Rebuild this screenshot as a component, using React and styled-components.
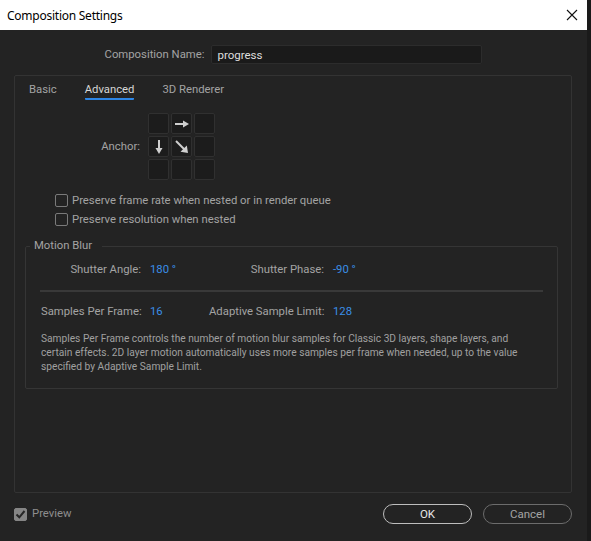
import React from "react";
import styled, { createGlobalStyle } from "styled-components";

const GlobalStyle = createGlobalStyle`
  html, body {
    margin: 0;
    padding: 0;
    background: #1b1b1b;
  }
  body {
    font-family: Roboto, "Noto Sans", sans-serif;
  }
`;

const anchorCells = [null, "right", null, "down", "diag", null, null, null, null];

const description = [
	"Samples Per Frame controls the number of motion blur samples for Classic 3D layers, shape layers, and",
	"certain effects. 2D layer motion automatically uses more samples per frame when needed, up to the value",
	"specified by Adaptive Sample Limit.",
];

const Arrow = ({ dir }) => {
	if (dir === "right")
		return (
			<svg width="16" height="16" viewBox="0 0 16 16">
				<path d="M1 8h9" stroke="#cfcfcf" strokeWidth="2" />
				<path d="M9 4.5L15 8 9 11.5z" fill="#cfcfcf" />
			</svg>
		);
	if (dir === "down")
		return (
			<svg width="16" height="16" viewBox="0 0 16 16">
				<path d="M8 1v9" stroke="#cfcfcf" strokeWidth="2" />
				<path d="M4.5 9L8 15 11.5 9z" fill="#cfcfcf" />
			</svg>
		);
	return (
		<svg width="16" height="16" viewBox="0 0 16 16">
			<path d="M2 2l8 8" stroke="#cfcfcf" strokeWidth="2" />
			<path d="M6.5 12.8L14 14 12.8 6.5z" fill="#cfcfcf" />
		</svg>
	);
};

const App = () => {
	return (
		<Screen>
			<GlobalStyle />
			<Window>
				<TitleBar>
					<Title>Composition Settings</Title>
					<CloseButton>
						<svg width="12" height="12" viewBox="0 0 12 12">
							<path d="M1 1l10 10M11 1L1 11" stroke="#111" strokeWidth="1.1" />
						</svg>
					</CloseButton>
				</TitleBar>
				<Body>
					<NameRow>
						<Label>Composition Name:</Label>
						<NameInput defaultValue="progress" />
					</NameRow>
					<TabPanel>
						<TabBar>
							<Tab>Basic</Tab>
							<Tab active>Advanced</Tab>
							<Tab>3D Renderer</Tab>
						</TabBar>
						<AnchorRow>
							<AnchorLabel>Anchor:</AnchorLabel>
							<AnchorGrid>
								{anchorCells.map((dir, i) => (
									<AnchorCell key={i}>{dir && <Arrow dir={dir} />}</AnchorCell>
								))}
							</AnchorGrid>
						</AnchorRow>
						<CheckList>
							<CheckRow>
								<CheckBox />
								<Label>Preserve frame rate when nested or in render queue</Label>
							</CheckRow>
							<CheckRow>
								<CheckBox />
								<Label>Preserve resolution when nested</Label>
							</CheckRow>
						</CheckList>
						<Group>
							<Legend>Motion Blur</Legend>
							<ValueGrid>
								<GridLabel>Shutter Angle:</GridLabel>
								<Value>180 °</Value>
								<GridLabel>Shutter Phase:</GridLabel>
								<Value>-90 °</Value>
							</ValueGrid>
							<Separator />
							<ValueGrid spaced>
								<GridLabel>Samples Per Frame:</GridLabel>
								<Value>16</Value>
								<GridLabel>Adaptive Sample Limit:</GridLabel>
								<Value>128</Value>
							</ValueGrid>
							<Description>
								{description.map((line, i) => (
									<span key={i}>{line}</span>
								))}
							</Description>
						</Group>
					</TabPanel>
					<Footer>
						<PreviewToggle>
							<CheckBox checked>
								<svg width="11" height="11" viewBox="0 0 11 11">
									<path d="M1.5 5.5l2.8 2.8L9.5 2" stroke="#262626" strokeWidth="2" fill="none" />
								</svg>
							</CheckBox>
							<PreviewText>Preview</PreviewText>
						</PreviewToggle>
						<Buttons>
							<PillButton primary>OK</PillButton>
							<PillButton>Cancel</PillButton>
						</Buttons>
					</Footer>
				</Body>
			</Window>
			<Edge />
		</Screen>
	);
};

export default App;

const Screen = styled.div`
	display: flex;
	width: 591px;
	height: 541px;
	overflow: hidden;
`;

const Window = styled.div`
	width: 587px;
	display: flex;
	flex-direction: column;
`;

const Edge = styled.div`
	width: 4px;
	background: #1a1a1a;
`;

const TitleBar = styled.div`
	height: 30px;
	background: #ffffff;
	display: flex;
	align-items: center;
	justify-content: space-between;
	padding: 0 9px 0 7px;
	box-sizing: border-box;
`;

const Title = styled.span`
	font-family: "Noto Sans", sans-serif;
	font-size: 12px;
	letter-spacing: -0.25px;
	color: #000;
`;

const CloseButton = styled.div`
	width: 12px;
	height: 12px;
	display: flex;
`;

const Body = styled.div`
	flex: 1;
	background: #232323;
	display: flex;
	flex-direction: column;
`;

const Label = styled.span`
	font-size: 11.3px;
	line-height: 16px;
	color: #a3a3a3;
	white-space: nowrap;
`;

const NameRow = styled.div`
	display: flex;
	justify-content: center;
	align-items: center;
	gap: 7px;
	margin-top: 15px;
`;

const NameInput = styled.input`
	width: 271px;
	height: 19px;
	box-sizing: border-box;
	background: #1a1a1a;
	border: 1px solid #2c2c2c;
	border-radius: 2px;
	color: #dedede;
	font-family: inherit;
	font-size: 11.5px;
	padding: 0 5px;
	outline: none;
`;

const TabPanel = styled.div`
	flex: 1;
	margin: 11px 15px 0 14px;
	border: 1px solid #333333;
	border-radius: 2px;
	display: flex;
	flex-direction: column;
`;

const TabBar = styled.div`
	display: flex;
	gap: 28px;
	padding: 6px 0 0 14px;
`;

const Tab = styled.div`
	font-size: 11.3px;
	line-height: 16px;
	color: ${(p) => (p.active ? "#d6d6d6" : "#a3a3a3")};
	border-bottom: 2px solid ${(p) => (p.active ? "#2d86e6" : "transparent")};
	border-radius: 1px;
`;

const AnchorRow = styled.div`
	display: flex;
	align-items: center;
	gap: 8px;
	margin-top: 13px;
`;

const AnchorLabel = styled(Label)`
	width: 125px;
	text-align: right;
`;

const AnchorGrid = styled.div`
	display: grid;
	grid-template-columns: repeat(3, 21px);
	grid-auto-rows: 21px;
	gap: 2px;
`;

const AnchorCell = styled.div`
	background: #1c1c1c;
	border: 1px solid #303030;
	border-radius: 2px;
	display: flex;
	align-items: center;
	justify-content: center;
`;

const CheckList = styled.div`
	display: flex;
	flex-direction: column;
	margin-top: 11px;
	padding-left: 40px;
`;

const CheckRow = styled.div`
	height: 19px;
	display: flex;
	align-items: center;
	gap: 4px;
`;

const CheckBox = styled.div`
	width: 13px;
	height: 13px;
	box-sizing: border-box;
	border-radius: 2px;
	border: 1.5px solid ${(p) => (p.checked ? "#858585" : "#7a7a7a")};
	background: ${(p) => (p.checked ? "#858585" : "transparent")};
	display: flex;
	align-items: center;
	justify-content: center;
`;

const Group = styled.fieldset`
	margin: 9px 13px 0 10px;
	padding: 0 14px 14px 15px;
	border: 1px solid #353535;
	border-radius: 2px;
	min-width: 0;
`;

const Legend = styled.legend`
	font-size: 11.3px;
	line-height: 16px;
	color: #a3a3a3;
	padding: 0 10px 0 4px;
	margin-left: -11px;
`;

const ValueGrid = styled.div`
	display: grid;
	grid-template-columns: 109px 59px 124px auto;
	align-items: center;
	margin-top: ${(p) => (p.spaced ? "12px" : "8px")};
`;

const GridLabel = styled(Label)`
	text-align: right;
	padding-right: 9px;
`;

const Value = styled.span`
	font-size: 11.3px;
	line-height: 16px;
	color: #3a8ee6;
`;

const Separator = styled.div`
	height: 2px;
	background: #393939;
	margin: 12px 0 0 -1px;
`;

const Description = styled.div`
	margin-top: 12px;
	display: flex;
	flex-direction: column;

	span {
		font-size: 10.2px;
		line-height: 14px;
		color: #a0a0a0;
		white-space: nowrap;
	}
`;

const Footer = styled.div`
	display: flex;
	align-items: center;
	justify-content: space-between;
	padding: 11px 15px 17px 14px;
`;

const PreviewToggle = styled.div`
	display: flex;
	align-items: center;
	gap: 5px;
`;

const PreviewText = styled(Label)`
	color: #8e8e8e;
`;

const Buttons = styled.div`
	display: flex;
	gap: 11px;
`;

const PillButton = styled.button`
	width: 89px;
	height: 20px;
	box-sizing: border-box;
	border-radius: 10px;
	background: transparent;
	border: 1.5px solid ${(p) => (p.primary ? "#bdbdbd" : "#6c6c6c")};
	color: ${(p) => (p.primary ? "#e6e6e6" : "#a3a3a3")};
	font-family: inherit;
	font-size: 11.5px;
	padding: 0;
	cursor: pointer;
`;
